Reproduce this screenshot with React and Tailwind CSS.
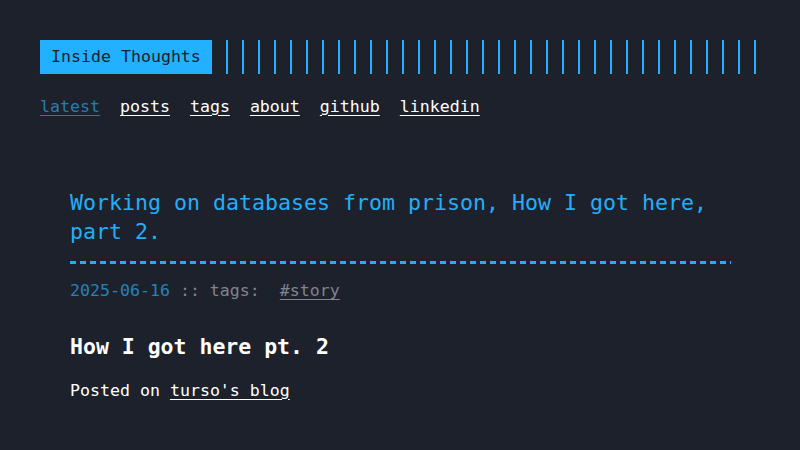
const navItems = ['latest', 'posts', 'tags', 'about', 'github', 'linkedin'];

const App = () => {
  return (
    <div
      className="min-h-screen bg-[#1d212c] text-white px-[40px] pt-[40px] text-[16.6px]"
      style={{ fontFamily: '"DejaVu Sans Mono", monospace' }}
    >
      <header>
        <div className="flex items-center gap-[14px]">
          <div className="h-[34px] px-[11px] flex items-center bg-[#23b0ff] text-[#1d212c] leading-none">
            Inside Thoughts
          </div>
          <div className="flex-1 h-[34px] bg-[repeating-linear-gradient(90deg,#23b0ff_0,#23b0ff_2px,transparent_2px,transparent_16px)]"></div>
        </div>
        <nav className="mt-[21px] flex gap-[20px] leading-[24px]">
          {navItems.map((item, i) => (
            <a
              key={item}
              href="#"
              className={`underline underline-offset-[3px] ${i === 0 ? 'text-[#2a7cb0]' : 'text-white'}`}
            >
              {item}
            </a>
          ))}
        </nav>
      </header>

      <main className="pl-[30px] mt-[69px] w-[690px]">
        <h1 className="text-[21.6px] leading-[29px] text-[#23aef9]">
          Working on databases from prison, How I got here, part 2.
        </h1>
        <div className="mt-[15px] h-[3px] w-[661px] bg-[repeating-linear-gradient(90deg,#23aef9_0,#23aef9_6px,transparent_6px,transparent_10px)]"></div>
        <div className="mt-[15px] leading-[24px] text-[#7f848e]">
          <span className="text-[#2882ba]">2025-06-16</span> :: tags:{'\u00a0\u00a0'}
          <a href="#" className="underline underline-offset-[3px]">#story</a>
        </div>
        <h2 className="mt-[29px] text-[21.5px] leading-[29px] font-bold">How I got here pt. 2</h2>
        <p className="mt-[18px] leading-[24px]">
          Posted on{' '}
          <a href="#" className="underline underline-offset-[3px]">turso's blog</a>
        </p>
      </main>
    </div>
  );
};

export default App;
